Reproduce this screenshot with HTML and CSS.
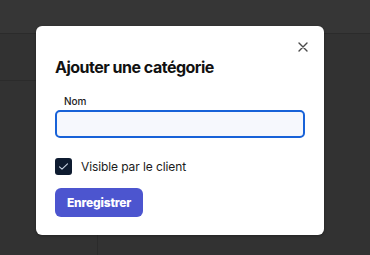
FILE: index.html
```html
<!DOCTYPE html>
<html lang="fr">

<head>
    <meta charset="UTF-8">
    <meta name="viewport" content="width=device-width, initial-scale=1.0">
    <title>Ajouter une catégorie</title>
    <link rel="stylesheet" href="styles.css">
</head>

<body>

    <div class="app">
        <div class="topbar"></div>
        <div class="main">
            <div class="sidebar">
                <div class="sidebar-head"></div>
            </div>
            <div class="content"></div>
        </div>
    </div>

    <div class="modal">
        <button class="close" type="button" aria-label="Fermer">
            <svg width="10" height="10" viewBox="0 0 10 10">
                <path d="M1 1L9 9M9 1L1 9" stroke="#4a4a4a" stroke-width="1.4" stroke-linecap="round" />
            </svg>
        </button>

        <h2>Ajouter une catégorie</h2>

        <form class="form">
            <label for="nom" class="field-label">Nom</label>
            <input type="text" id="nom" class="field-input">

            <label class="check">
                <span class="box">
                    <svg width="11" height="9" viewBox="0 0 11 9">
                        <path d="M1.5 4.8L4 7.2L9.5 1.8" fill="none" stroke="#c9d3e3" stroke-width="1.1" stroke-linecap="round" stroke-linejoin="round" />
                    </svg>
                </span>
                Visible par le client
            </label>

            <button type="submit" class="save">Enregistrer</button>
        </form>
    </div>

</body>

</html>
```

FILE: styles.css
```css
body {
    margin: 0;
    font-family: Inter, "Noto Sans", sans-serif;
    background-color: #323232;
    width: 370px;
    height: 255px;
    overflow: hidden;
}

.app {
    display: flex;
    flex-direction: column;
    height: 255px;
}

.topbar {
    height: 33px;
    background-color: #363636;
    border-bottom: 1px solid #2b2b2b;
}

.main {
    flex: 1;
    display: flex;
}

.sidebar {
    width: 97px;
    border-right: 1px solid #2b2b2b;
}

.sidebar-head {
    height: 46px;
    border-bottom: 1px solid #2b2b2b;
}

.content {
    flex: 1;
}

.modal {
    position: absolute;
    top: 26px;
    left: 36px;
    width: 288px;
    height: 209px;
    box-sizing: border-box;
    padding: 30px 19px 0;
    background-color: white;
    border-radius: 6px;
    box-shadow: 0 1px 3px rgba(0, 0, 0, 0.3);
}

.close {
    position: absolute;
    top: 16px;
    right: 16px;
    width: 10px;
    height: 10px;
    padding: 0;
    border: none;
    background: none;
    display: flex;
}

h2 {
    margin: 0;
    font-size: 16px;
    line-height: 22px;
    font-weight: 700;
    color: #111;
    letter-spacing: -0.5px;
}

.form {
    display: flex;
    flex-direction: column;
    align-items: flex-start;
}

.field-label {
    margin: 17px 0 2px 9px;
    font-size: 10px;
    line-height: 13px;
    font-weight: 500;
    color: #222;
}

.field-input {
    box-sizing: border-box;
    width: 250px;
    height: 28px;
    margin: 0;
    border: 2px solid #1862d8;
    border-radius: 5px;
    background-color: #f6f8fd;
    outline: none;
}

.check {
    display: flex;
    align-items: center;
    gap: 9px;
    margin-top: 20px;
    font-size: 12px;
    letter-spacing: -0.1px;
    color: #1b1b1b;
}

.box {
    width: 17px;
    height: 17px;
    border-radius: 3px;
    background-color: #0e1b30;
    display: flex;
    align-items: center;
    justify-content: center;
}

.save {
    margin-top: 13px;
    height: 29px;
    padding: 0 12px;
    border: none;
    border-radius: 6px;
    background-color: #4c55cf;
    color: white;
    font-family: inherit;
    font-size: 12px;
    font-weight: 800;
    letter-spacing: -0.2px;
}
```
